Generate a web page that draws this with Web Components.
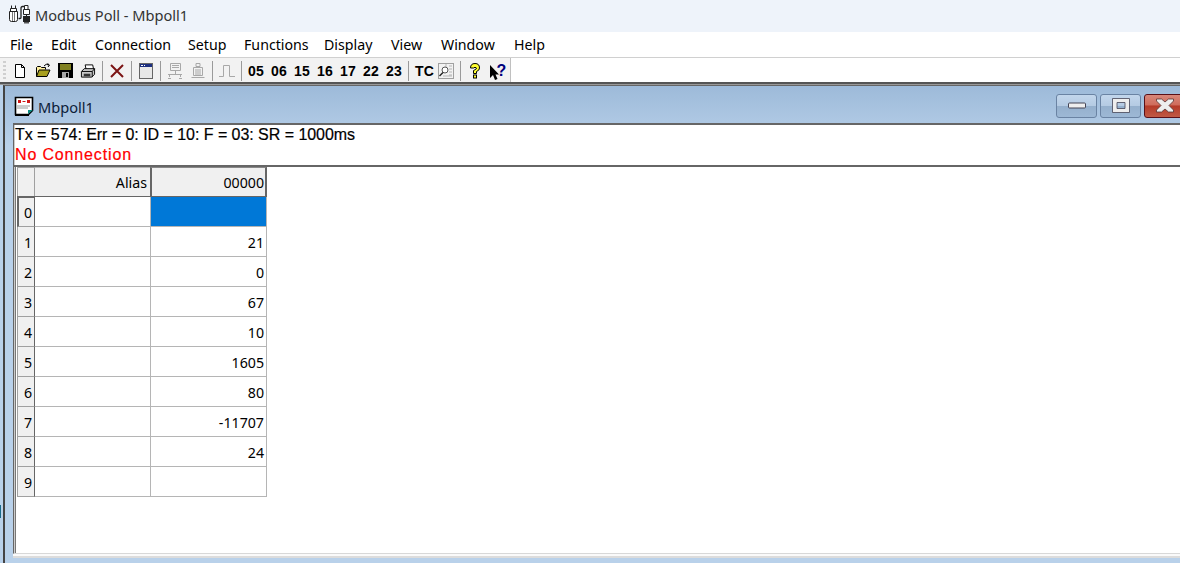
<!DOCTYPE html>
<html><head><meta charset="utf-8">
<style>html,body{margin:0;padding:0;width:1180px;height:563px;overflow:hidden;background:#b9d1ea}</style>
</head><body>
<mb-app></mb-app>
<script>
const ICONS={
 app:`<svg width="22" height="20" viewBox="0 0 22 20" fill="none" stroke="#222" stroke-width="1"><path d="M2.500 .5v3M6.500 .5v3M1.500 3.500h6v3h-6z" fill="#fff"/><path d="M.5 6.500h8v8q0 2-2 2h-4q-2 0-2-2z" fill="#fff"/><path d="M3.500 7v9M5.500 7v9" stroke="#777"/><path d="M9.500 13.500h1.500q1 0 1-1V3q0-1.500 1.500-1.500h1.500" stroke-width="1.300"/><path d="M15.500 .5h3.500v4h-3.500zM14.500 4.500h6v5h-6z" fill="#fff"/><path d="M17.500 10v1" /><rect x="14" y="11" width="7" height="6" fill="#222" stroke="none"/><rect x="15" y="17" width="5" height="1.500" fill="#555" stroke="none"/></svg>`,
 doc:`<svg width="16" height="16" viewBox="0 0 16 16"><path d="M3.500 1.500h6l3 3v10h-9z M9.500 1.500v3h3" fill="#fff" stroke="#000"/></svg>`,
 open:`<svg width="16" height="16" viewBox="0 0 16 16"><path d="M1.500 13.500v-9l1-1h3l1 1h4v2" fill="#ffef9c" stroke="#000"/><path d="M1.500 13.500l2.500-6.500h11l-3 6.500z" fill="#a8a020" stroke="#000"/><path d="M9 3q2-3 5-1" fill="none" stroke="#000"/><path d="M12.500 .5l2 1.500-1.500 2" fill="none" stroke="#000"/></svg>`,
 save:`<svg width="15" height="15" viewBox="0 0 15 15"><path d="M0 0h15v15H0z" fill="#000"/><rect x="2" y="1" width="11" height="6" fill="#808020"/><rect x="4" y="9" width="7" height="6" fill="#a8a8a8"/><rect x="8" y="10" width="2" height="4" fill="#000"/></svg>`,
 print:`<svg width="17" height="16" viewBox="0 0 17 16"><path d="M5.500 1.500h8l1 5h-8z" fill="#fff" stroke="#000"/><path d="M1.500 8.500l3-3h11v6l-3 3h-11z" fill="#c8c8c8" stroke="#000"/><path d="M2 8.500h11v6M13 8.500l2.500-3" fill="none" stroke="#000"/><path d="M4 11.500h7M4 13h7" stroke="#000"/></svg>`,
 x:`<svg width="16" height="16" viewBox="0 0 16 16"><path d="M2 2l12 12M14 2L2 14" stroke="#7c1414" stroke-width="2"/></svg>`,
 win:`<svg width="14" height="16" viewBox="0 0 14 16"><rect x=".5" y=".5" width="13" height="15" fill="#e8e8e8" stroke="#666"/><rect x="1" y="1" width="12" height="3" fill="#1c2f80"/><path d="M2 2.500h2M5 2.500h1" stroke="#fff"/></svg>`,
 net:`<svg width="16" height="16" viewBox="0 0 16 16" fill="none" stroke="#a8a8a8"><path d="M3.500 .5h10v7h-10zM5 2.500h7M5 4.500h7M8.500 8v3M1 11.500h14M1 15.500h3M12 15.500h3M2.500 12v2M13.500 12v2"/></svg>`,
 dev:`<svg width="16" height="16" viewBox="0 0 16 16" fill="none" stroke="#a8a8a8"><path d="M6 .5h4v3h-4zM3.500 4.500h9v8h-9zM5 7h6M5 9h6M5 11h6M1.500 14.500h13"/></svg>`,
 pulse:`<svg width="16" height="14" viewBox="0 0 16 14" fill="none" stroke="#a8a8a8"><path d="M0 12.500h4.500v-11h6v11h5.500"/></svg>`,
 tc:`<svg width="16" height="16" viewBox="0 0 16 16"><rect x=".5" y=".5" width="15" height="15" fill="#f2f2f2" stroke="#a0a0a0"/><path d="M8 1v3M11 3h3M11 6h3M11 9h3M11 12h3M5 13h9" stroke="#b5b5b5"/><circle cx="7" cy="7" r="3" fill="#fff" stroke="#555"/><path d="M5 9.500l-3.500 3.500" stroke="#222" stroke-width="1.400"/></svg>`,
 help:`<svg width="12" height="16" viewBox="0 0 12 16"><path d="M1.500 5q0-4.500 4.500-4.500t4.500 4.500q0 2.500-3 3.500v2h-3V7.500Q7.500 6.500 7.500 5 6 3.500 4.500 5z" fill="#ffff30" stroke="#000"/><rect x="4.500" y="12" width="3" height="3" fill="#ffff30" stroke="#000"/></svg>`,
 ctx:`<svg width="18" height="22" viewBox="0 -4 18 22"><path d="M1 1v13l3-3 2 5 2.500-1-2-4.500H10z" fill="#000"/><text x="7.500" y="12" font-family="Liberation Sans" font-weight="700" font-size="16" fill="#00007c">?</text></svg>`,
 child:`<svg width="20" height="20" viewBox="0 0 20 20"><path d="M1.500 1.500h17v13l-4 4h-13z" fill="#fff" stroke="#000" stroke-width="1.600"/><path d="M4 4h3v3H4zM8.500 5h3v1h-3zM13 4h3v3h-3z" fill="#d01818"/><path d="M3 10h13M3 12h11" stroke="#999"/><path d="M14 18l0-4h5z" fill="#0a8a80"/><path d="M1 19h14" stroke="#000" stroke-width="2"/></svg>`
};
const def=(n,html)=>customElements.define(n,class extends HTMLElement{
  connectedCallback(){ if(this.shadowRoot)return; this.attachShadow({mode:'open'}).innerHTML=typeof html==='function'?html(this):html; }
});
const UI='"Noto Sans","Open Sans",sans-serif';

def('mb-icon',h=>`<style>:host{display:flex;align-items:center;justify-content:center;width:${h.getAttribute('w')||16}px;flex:none}svg{display:block}</style>${ICONS[h.getAttribute('n')]}`);

def('mb-title',`<style>:host{display:flex;height:32px;align-items:center;background:#eef3fa;padding-left:9px;box-sizing:border-box;font:14.6px ${UI};color:#333;gap:4px}span{padding-bottom:3px}</style>
<mb-icon n="app" w="22" style="margin-bottom:2px"></mb-icon><span><slot></slot></span>`);

def('mb-menu',`<style>:host{display:flex;height:25px;align-items:center;background:#fff;padding-left:10px;box-sizing:border-box;font:14.2px ${UI};color:#000}
</style><slot></slot>`);
def('mb-mi',h=>`<style>:host{display:block;flex:none;width:${h.getAttribute('w')}px}</style><slot></slot>`);

def('mb-toolbar',`<style>:host{display:flex;height:26px;background:#fff;box-sizing:border-box;border-top:1px solid #d0d0d0;flex:none}
.bar{display:flex;align-items:center;background:#f2f2f2;width:511px;box-sizing:border-box;padding-left:3px;border-right:1px solid #c0c0c0}
.grip{width:3px;height:20px;margin-right:6px;background:repeating-linear-gradient(#cfcfcf 0 2px,transparent 2px 4px);}
</style><div class="bar"><div class="grip"></div><slot></slot></div>`);

def('mb-sep',`<style>:host{display:block;width:1px;height:20px;background:#9a9a9a;flex:none}</style>`);

def('mb-num',`<style>:host{display:block;font:700 14px "Liberation Sans",sans-serif;letter-spacing:.3px;color:#000;width:23px;flex:none;text-align:left;white-space:nowrap}</style><slot></slot>`);

def('mb-ctl',h=>{const k=h.getAttribute('k');const g={
 min:`<rect x=".5" y="5" width="17" height="5" rx="1" fill="#eee" stroke="#445"/>`,
 max:`<path fill-rule="evenodd" d="M.5 .5h17v14H.5z M5 4.500h8v6H5z" fill="#eee" stroke="#445" stroke-width=".8"/>`,
 close:`<path d="M.5 1h5l3.500 3 3.500-3h5v2l-4.500 4.500 4.500 4.500v2h-5l-3.500-3-3.500 3h-5v-2l4.500-4.500-4.500-4.500z" fill="#eee" stroke="#533" stroke-width=".8"/>`}[k];
 const bg=k==='close'?'linear-gradient(#d8877a 0,#cf6c5c 45%,#b53a28 50%,#c05a45 100%)':'linear-gradient(#c2d6ec 0,#b5cbe3 48%,#95b0cd 52%,#9db8d5 100%)';
 return `<style>:host{display:flex;align-items:center;justify-content:center;box-sizing:border-box;width:41px;height:24px;border:1px solid ${k==='close'?'#5a1018':'#6a83a3'};border-radius:3px;background:${bg};flex:none}svg{display:block;overflow:visible}</style>
 <svg width="18" height="15" viewBox="0 0 18 15">${g}</svg>`});

def('mb-grid',`<style>:host{display:grid;grid-template-columns:18px 116px 116px;grid-auto-rows:30px;align-self:flex-start;font:14.2px ${UI};color:#000;margin-left:1px;width:250px}</style><slot></slot>`);

def('mb-cell',h=>{const k=h.getAttribute('k')||'';const st={
 corner:'background:#f0f0f0;border:1px solid #a0a0a0',
 head:'background:#f0f0f0;border-right:1px solid #b5b5b5;border-bottom:1px solid #666;border-top:1px solid #b5b5b5;padding-right:3px',
 headsel:'background:#f0f0f0;border-left:2px solid #666;border-right:2px solid #666;border-top:1px solid #888;border-bottom:1px solid #666;margin-left:-1px;padding-right:1px',
 row:'background:#f0f0f0;border-right:1px solid #666;border-left:1px solid #a0a0a0;border-bottom:1px solid #a0a0a0',
 rowsel:'background:#f0f0f0;border:2px solid #666;border-right:1px solid #666;border-bottom:1px solid #a0a0a0;margin-top:-1px',
 sel:'background:#0078d7;border-right:1px solid #b5b5b5;border-bottom:1px solid #b5b5b5',
 '':'background:#fff;border-right:1px solid #b5b5b5;border-bottom:1px solid #b5b5b5'}[k];
 return `<style>:host{display:flex;align-items:center;justify-content:flex-end;box-sizing:border-box;padding:1px 2px 0 0;min-width:0;${st}}</style><slot></slot>`});

def('mb-child',`<style>
:host{position:absolute;left:3px;top:85px;width:1200px;height:478px;box-sizing:border-box;display:flex;flex-direction:column;background:linear-gradient(#9dbad9,#b9d1ea 60px);border-left:2px solid #444;border-top:1px solid #666;padding:0 0 9px 8px;}
.cap{display:flex;align-items:center;height:37px;flex:none;font:14.6px ${UI};color:#0c2038;gap:4px;padding-top:3px;box-sizing:border-box}
.cap span{padding-top:2px}
.cap mb-icon{margin-left:1px}
.btns{margin-left:auto;display:flex;gap:3px;margin-right:18px;margin-top:-1px}
.cli{flex:1;background:#fff;border-top:2px solid #666;border-left:1px solid #666;border-bottom:1px solid #d8d8d8;box-shadow:inset 1px 0 #ccc,0 2px 0 #fafafa,0 4px 0 #dcdcdc;display:flex;flex-direction:column;min-height:0;position:relative}
.info{height:42px;flex:none;box-sizing:border-box;font:16px/20px "Liberation Sans",sans-serif;color:#000;padding:0 0 0 1px;border-bottom:2px solid #666;-webkit-text-stroke:.2px currentColor;letter-spacing:-.04px}
.r{color:#f00;letter-spacing:.85px}
.body{flex:1;display:flex;border-left:1px solid #777;margin-left:1px}
</style>
<div class="cap"><mb-icon n="child" w="20"></mb-icon><span>Mbpoll1</span><div class="btns"><mb-ctl k="min"></mb-ctl><mb-ctl k="max"></mb-ctl><mb-ctl k="close"></mb-ctl></div></div>
<div class="cli"><div class="info">Tx = 574: Err = 0: ID = 10: F = 03: SR = 1000ms<br><span class="r">No Connection</span></div>
<div class="body"><slot></slot></div></div>`);

def('mb-app',`<style>:host{display:block;position:relative;width:1180px;height:563px;overflow:hidden;background:#b9d1ea}
.mdi{position:absolute;left:0;top:82px;right:0;bottom:0;border-top:2px solid #555;box-shadow:inset 0 1px #999;background:#b9d1ea}
.tick{position:absolute;left:0;top:505px;width:1px;height:13px;background:#1a6a8a}</style>
<mb-title>Modbus Poll - Mbpoll1</mb-title>
<mb-menu><mb-mi w="41">File</mb-mi><mb-mi w="44">Edit</mb-mi><mb-mi w="93">Connection</mb-mi><mb-mi w="56">Setup</mb-mi><mb-mi w="80">Functions</mb-mi><mb-mi w="67">Display</mb-mi><mb-mi w="50">View</mb-mi><mb-mi w="73">Window</mb-mi><mb-mi w="40">Help</mb-mi></mb-menu>
<mb-toolbar>
<mb-icon n="doc"></mb-icon><mb-icon n="open" style="margin-left:7px"></mb-icon><mb-icon n="save" style="margin-left:6px"></mb-icon><mb-icon n="print" style="margin-left:7px"></mb-icon>
<mb-sep style="margin-left:6px"></mb-sep><mb-icon n="x" style="margin-left:6px"></mb-icon><mb-sep style="margin-left:6px"></mb-sep><mb-icon n="win" style="margin-left:6px"></mb-icon><mb-sep style="margin-left:6px"></mb-sep>
<mb-icon n="net" style="margin-left:6px"></mb-icon><mb-icon n="dev" style="margin-left:7px"></mb-icon><mb-sep style="margin-left:6px"></mb-sep><mb-icon n="pulse" style="margin-left:6px"></mb-icon><mb-sep style="margin-left:6px"></mb-sep>
<mb-num style="margin-left:6px">05</mb-num><mb-num>06</mb-num><mb-num>15</mb-num><mb-num>16</mb-num><mb-num>17</mb-num><mb-num>22</mb-num><mb-num>23</mb-num>
<mb-sep style="margin-left:-1px"></mb-sep><mb-num style="margin-left:6px">TC</mb-num><mb-icon n="tc"></mb-icon><mb-sep style="margin-left:6px"></mb-sep><mb-icon n="help" w="12" style="margin-left:8px"></mb-icon><mb-icon n="ctx" w="18" style="margin-left:8px"></mb-icon>
</mb-toolbar>
<div class="mdi"></div><div class="tick"></div>
<mb-child><mb-grid></mb-grid></mb-child>`);
</script>
<script>
const grid=document.querySelector('mb-app').shadowRoot.querySelector('mb-grid');
const rows=['','21','0','67','10','1605','80','-11707','24',''];
let h='<mb-cell k="corner"></mb-cell><mb-cell k="head">Alias</mb-cell><mb-cell k="headsel">00000</mb-cell>';
rows.forEach((v,i)=>{h+=`<mb-cell k="${i?'row':'rowsel'}">${i}</mb-cell><mb-cell></mb-cell><mb-cell k="${i?'':'sel'}">${v}</mb-cell>`;});
grid.innerHTML=h;
</script>
</body></html>
